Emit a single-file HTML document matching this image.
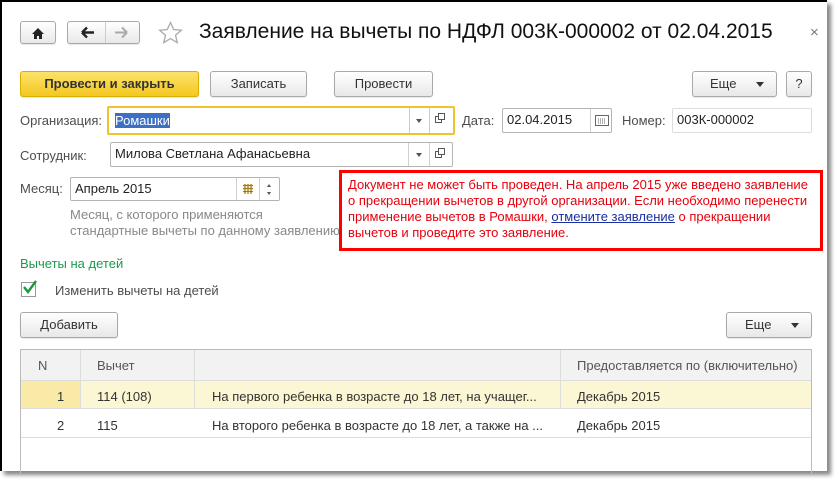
<!DOCTYPE html>
<html><head><meta charset="utf-8"><style>
*{box-sizing:border-box}
body{margin:0;width:840px;height:481px;background:#fff;font-family:"Liberation Sans",Arial,sans-serif;font-size:13px;color:#333;position:relative;overflow:hidden}
.a{position:absolute}
.win{position:absolute;left:0;top:0;width:827px;height:471px;background:#fff;border-left:2px solid #000;border-top:2px solid #000;box-shadow:4px 4px 4px #888}
.btn{position:absolute;border:1px solid #a9a9a9;border-radius:3px;background:linear-gradient(#fff,#e8e8e8);text-align:center;line-height:23px;color:#333;box-shadow:0 1px 1px rgba(0,0,0,.1)}
.inp{position:absolute;border:1px solid #b4b4b4;border-radius:2px;background:#fff;padding-left:4px;line-height:22px;color:#222}
.lbl{position:absolute;color:#4d4d4d}
.sep{position:absolute;top:0;bottom:0;border-left:1px solid #d0d0d0}
.red{color:#e8000c}
</style></head><body>
<div class="win"></div>
<div class="btn" style="left:20px;top:21px;width:36px;height:23px;font-size:14px;line-height:21px">
<svg width="14" height="13" viewBox="0 0 14 13" style="margin-top:5px"><path d="M7 1L1 7h2v5h3V9h2v3h3V7h2z" fill="#222"/></svg></div>
<div class="btn" style="left:67px;top:21px;width:73px;height:23px">
<svg width="73" height="21" viewBox="0 0 73 21" style="position:absolute;left:0;top:0"><path d="M14 10.5h12M14 10.5l5-5M14 10.5l5 5" stroke="#222" stroke-width="2.4" fill="none"/><line x1="37.5" y1="0" x2="37.5" y2="21" stroke="#ccc"/><path d="M59 10.5h-12M59 10.5l-5-5M59 10.5l-5 5" stroke="#aaa" stroke-width="2" fill="none"/></svg></div>
<svg class="a" style="left:158px;top:21px" width="25" height="24" viewBox="0 0 25 24"><path d="M12.5 1.5l3.2 7 7.6.7-5.8 5 1.8 7.4-6.8-4-6.8 4 1.8-7.4-5.8-5 7.6-.7z" fill="none" stroke="#aaa" stroke-width="1.3"/></svg>
<div class="a" style="left:199px;top:20px;font-size:21px;color:#111;white-space:nowrap">Заявление на вычеты по НДФЛ 003К-000002 от 02.04.2015</div>
<div class="a" style="left:810px;top:24px;font-size:15px;color:#777">×</div>

<div class="btn" style="left:20px;top:71px;width:179px;height:26px;line-height:24px;background:linear-gradient(#fde26a,#f4c820);border-color:#d9b000;font-weight:bold;color:#333">Провести и закрыть</div>
<div class="btn" style="left:210px;top:71px;width:97px;height:26px;line-height:24px">Записать</div>
<div class="btn" style="left:334px;top:71px;width:99px;height:26px;line-height:24px">Провести</div>
<div class="btn" style="left:692px;top:71px;width:85px;height:26px;line-height:24px;text-align:left;padding-left:17px">Еще<span style="position:absolute;right:12px;top:10px;border:4px solid transparent;border-top:5px solid #333"></span></div>
<div class="btn" style="left:786px;top:71px;width:26px;height:26px;line-height:24px">?</div>

<div class="lbl" style="left:20px;top:113px">Организация:</div>
<div class="inp" style="left:107px;top:106px;width:348px;height:29px;border:2px solid #f2c12e;line-height:25px;padding-left:6px"><span style="background:#3d6fc2;color:#fff">Ромашки</span>
<div class="sep" style="left:300px;border-color:#ccc"></div><div class="sep" style="left:320px;border-color:#ccc"></div>
<span class="a" style="left:307px;top:11px;border:3px solid transparent;border-top:4px solid #555"></span>
<span class="a" style="left:326px;top:8px;width:7px;height:7px;border:1px solid #555"></span><span class="a" style="left:329px;top:5px;width:7px;height:7px;border:1px solid #555;background:#fff"></span></div>
<div class="lbl" style="left:462px;top:113px">Дата:</div>
<div class="inp" style="left:502px;top:108px;width:110px;height:25px">02.04.2015<div class="sep" style="left:87px"></div>
<svg class="a" style="left:92px;top:6px" width="14" height="11"><rect x=".5" y=".5" width="13" height="10" fill="none" stroke="#666"/><path d="M3 4h8M3 6h8M3 8h8" stroke="#666" stroke-dasharray="1 1"/></svg></div>
<div class="lbl" style="left:622px;top:113px">Номер:</div>
<div class="inp" style="left:672px;top:108px;width:140px;height:25px;border-color:#ddd">003К-000002</div>

<div class="lbl" style="left:20px;top:148px">Сотрудник:</div>
<div class="inp" style="left:110px;top:142px;width:343px;height:25px">Милова Светлана Афанасьевна<div class="sep" style="left:297px"></div><div class="sep" style="left:318px"></div>
<span class="a" style="left:305px;top:10px;border:3px solid transparent;border-top:4px solid #555"></span>
<span class="a" style="left:324px;top:8px;width:7px;height:7px;border:1px solid #555"></span><span class="a" style="left:327px;top:5px;width:7px;height:7px;border:1px solid #555;background:#fff"></span></div>

<div class="lbl" style="left:20px;top:181px">Месяц:</div>
<div class="inp" style="left:70px;top:177px;width:210px;height:24px">Апрель 2015<div class="sep" style="left:165px"></div><div class="sep" style="left:188px"></div>
<svg class="a" style="left:172px;top:6px" width="10" height="10"><path d="M0 1.5h10M0 4.5h10M0 7.5h10M2 0v10M5 0v10M8 0v10" stroke="#a07a10" stroke-width="1.2"/></svg>
<span class="a" style="left:196px;top:4px;border:2px solid transparent;border-bottom:3px solid #555"></span><span class="a" style="left:196px;top:14px;border:2px solid transparent;border-top:3px solid #555"></span></div>
<div class="lbl" style="left:70px;top:207px;color:#888;line-height:16px">Месяц, с которого применяются<br>стандартные вычеты по данному заявлению</div>

<div class="a" style="left:339px;top:170px;width:484px;height:81px;border:3px solid #f00;background:#fff"></div>
<div class="a red" style="left:348px;top:177px;line-height:16px;font-size:13px;white-space:nowrap">Документ не может быть проведен. На апрель 2015 уже введено заявление<br>о прекращении вычетов в другой организации. Если необходимо перенести<br>применение вычетов в Ромашки, <span style="color:#1a2fa0;text-decoration:underline">отмените заявление</span> о прекращении<br>вычетов и проведите это заявление.</div>

<div class="a" style="left:20px;top:256px;color:#1b9a4c">Вычеты на детей</div>
<div class="a" style="left:21px;top:282px;width:15px;height:15px;border:1px solid #999;background:#fff"></div>
<svg class="a" style="left:22px;top:279px" width="16" height="16"><path d="M2 8l4 5 8-11" stroke="#1a9a3a" stroke-width="2.4" fill="none"/></svg>
<div class="lbl" style="left:55px;top:283px">Изменить вычеты на детей</div>

<div class="btn" style="left:20px;top:312px;width:98px;height:26px;line-height:24px">Добавить</div>
<div class="btn" style="left:726px;top:312px;width:86px;height:26px;line-height:24px;text-align:left;padding-left:18px">Еще<span style="position:absolute;right:12px;top:10px;border:4px solid transparent;border-top:5px solid #333"></span></div>

<div class="a" style="left:20px;top:349px;width:792px;height:125px;border:1px solid #bbb;border-bottom:none;overflow:hidden">
<div class="a" style="left:0;top:0;width:792px;height:31px;background:#f2f2f2;border-bottom:1px solid #ddd"></div>
<div class="a" style="left:0;top:31px;width:792px;height:28px;background:#fbf6d4;border-bottom:1px solid #ddd"></div>
<div class="a" style="left:0;top:31px;width:60px;height:27px;background:#f9eaa8"></div>
<div class="a" style="left:0;top:59px;width:792px;height:29px;border-bottom:1px solid #ddd"></div>
<div class="a" style="left:59px;top:0;height:58px;border-left:1px solid #ddd"></div>
<div class="a" style="left:173px;top:0;height:58px;border-left:1px solid #ddd"></div>
<div class="a" style="left:539px;top:0;height:58px;border-left:1px solid #ddd"></div>
<div class="a" style="left:17px;top:8px;color:#555">N</div>
<div class="a" style="left:76px;top:8px;color:#555">Вычет</div>
<div class="a" style="left:556px;top:8px;color:#555">Предоставляется по (включительно)</div>
<div class="a" style="left:36px;top:39px">1</div><div class="a" style="left:76px;top:39px">114 (108)</div><div class="a" style="left:191px;top:39px">На первого ребенка в возрасте до 18 лет, на учащег...</div><div class="a" style="left:556px;top:39px">Декабрь 2015</div>
<div class="a" style="left:36px;top:68px">2</div><div class="a" style="left:76px;top:68px">115</div><div class="a" style="left:191px;top:68px">На второго ребенка в возрасте до 18 лет, а также на ...</div><div class="a" style="left:556px;top:68px">Декабрь 2015</div>
</div>
</body></html>
